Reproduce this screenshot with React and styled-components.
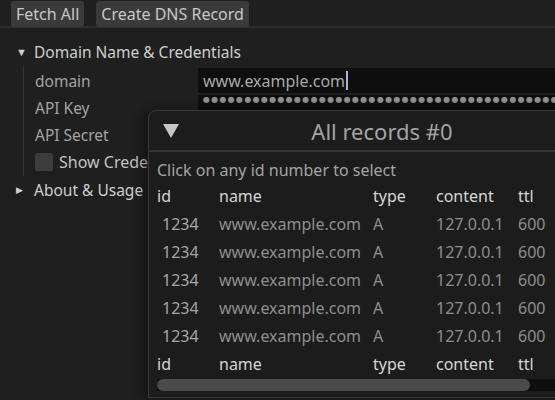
import React from "react";
import styled, { createGlobalStyle } from "styled-components";

const Global = createGlobalStyle`
  html, body { margin: 0; padding: 0; background: #1f1f1f; }
  body {
    width: 555px; height: 400px; overflow: hidden;
    font-family: "Noto Sans", "Open Sans", sans-serif;
    font-size: 15.5px;
    color: #d2d2d2;
  }
`;

const Page = styled.div`
  position: relative;
  width: 555px;
  height: 400px;
  overflow: hidden;
  background: #1f1f1f;
`;

const MenuBar = styled.div`
  display: flex;
  gap: 12px;
  height: 28px;
  padding: 1px 0 0 11px;
  box-sizing: border-box;
  border-bottom: 2px solid #2e2e2e;
`;

const Button = styled.button`
  height: 26px;
  padding: 0 5px;
  border: none;
  border-radius: 3px;
  background: #3a3a3a;
  color: #c8c8c8;
  font: inherit;
  font-size: 16px;
`;

const Tree = styled.div`
  padding: 10px 0 0 16px;
`;

const Node = styled.div`
  display: flex;
  align-items: center;
  height: 27px;
  color: #cfcfcf;
`;

const Arrow = styled.span`
  width: 18px;
  font-size: ${p => (p.open ? "11px" : "9px")};
  color: #cfcfcf;
`;

const Children = styled.div`
  margin-left: 7px;
  padding-left: 11px;
  border-left: 1px solid #333;
  padding: 2px 0 1px 11px;
`;

const Field = styled.div`
  display: flex;
  align-items: center;
  height: 27px;
`;

const Label = styled.span`
  width: 163px;
  color: #a4a4a4;
`;

const Input = styled.div`
  flex: 1;
  height: 25px;
  margin-right: -20px;
  background: #0e0e0e;
  display: flex;
  align-items: center;
  padding-left: 5px;
  color: #a8a8a8;
  overflow: hidden;
  white-space: nowrap;
  font-size: 16px;
`;

const Caret = styled.span`
  display: inline-block;
  width: 2px;
  height: 19px;
  background: #9fb8d8;
  margin-left: 1px;
`;

const Dots = styled.span`
  color: #8e8e8e;
  font-family: "DejaVu Sans", sans-serif;
  font-size: 8px;
  line-height: 10px;
  letter-spacing: 1.3px;
  align-self: flex-start;
  margin-top: 0px;
`;

const Check = styled.span`
  width: 18px;
  height: 18px;
  border-radius: 2px;
  background: #3c3c3c;
  margin-right: 6px;
`;

const CheckText = styled.span`
  color: #c4c4c4;
  font-size: 16px;
`;

const Window = styled.div`
  position: absolute;
  left: 148px;
  top: 110px;
  width: 460px;
  height: 286px;
  background: #1c1c1c;
  border: 1px solid #3a3a3a;
  border-radius: 8px 8px 0 0;
  box-shadow: -6px 0 10px rgba(0, 0, 0, 0.35);
  display: flex;
  flex-direction: column;
  font-size: 16px;
`;

const TitleBar = styled.div`
  position: relative;
  height: 39px;
  border-bottom: 2px solid #333;
  display: flex;
  align-items: center;
  justify-content: center;
  font-size: 22px;
  color: #a4a4a4;
  padding-left: 6px;
`;

const Collapse = styled.svg`
  position: absolute;
  left: 14px;
  top: 13px;
`;

const Body = styled.div`
  padding: 5px 0 0 8px;
`;

const Hint = styled.div`
  height: 25px;
  display: flex;
  align-items: center;
  color: #a4a4a4;
`;

const Row = styled.div`
  display: grid;
  grid-template-columns: 62px 154px 63px 82px 60px;
  height: 28px;
  align-items: center;
  color: ${p => (p.head ? "#d6d6d6" : "#8e8e8e")};
`;

const IdCell = styled.span`
  padding-left: ${p => (p.head ? "0" : "5px")};
  color: ${p => (p.head ? "#d6d6d6" : "#a6a6a6")};
`;

const Scroll = styled.div`
  margin-top: 1px;
  height: 12px;
  background: #0e0e0e;
  margin-right: -10px;
`;

const Thumb = styled.div`
  width: 373px;
  height: 12px;
  border-radius: 6px;
  background: #4a4a4a;
`;

const records = Array.from({ length: 5 }, () => ({
  id: "1234",
  name: "www.example.com",
  type: "A",
  content: "127.0.0.1",
  ttl: "600",
}));

function HeadRow() {
  return (
    <Row head>
      <IdCell head>id</IdCell>
      <span>name</span>
      <span>type</span>
      <span>content</span>
      <span>ttl</span>
    </Row>
  );
}

export default function App() {
  return (
    <Page>
      <Global />
      <MenuBar>
        <Button>Fetch All</Button>
        <Button>Create DNS Record</Button>
      </MenuBar>
      <Tree>
        <Node>
          <Arrow open>▼</Arrow>
          Domain Name &amp; Credentials
        </Node>
        <Children>
          <Field>
            <Label>domain</Label>
            <Input>
              www.example.com
              <Caret />
            </Input>
          </Field>
          <Field>
            <Label>API Key</Label>
            <Input>
              <Dots>{"●".repeat(60)}</Dots>
            </Input>
          </Field>
          <Field>
            <Label>API Secret</Label>
            <Input>
              <Dots>{"●".repeat(60)}</Dots>
            </Input>
          </Field>
          <Field>
            <Check />
            <CheckText>Show Credentials</CheckText>
          </Field>
        </Children>
        <Node>
          <Arrow>▶</Arrow>
          About &amp; Usage
        </Node>
      </Tree>
      <Window>
        <TitleBar>
          <Collapse width="16" height="14" viewBox="0 0 16 14">
            <polygon points="0,0 16,0 8,14" fill="#c4c4c4" />
          </Collapse>
          All records #0
        </TitleBar>
        <Body>
          <Hint>Click on any id number to select</Hint>
          <HeadRow />
          {records.map((r, i) => (
            <Row key={i}>
              <IdCell>{r.id}</IdCell>
              <span>{r.name}</span>
              <span>{r.type}</span>
              <span>{r.content}</span>
              <span>{r.ttl}</span>
            </Row>
          ))}
          <HeadRow />
          <Scroll>
            <Thumb />
          </Scroll>
        </Body>
      </Window>
    </Page>
  );
}
